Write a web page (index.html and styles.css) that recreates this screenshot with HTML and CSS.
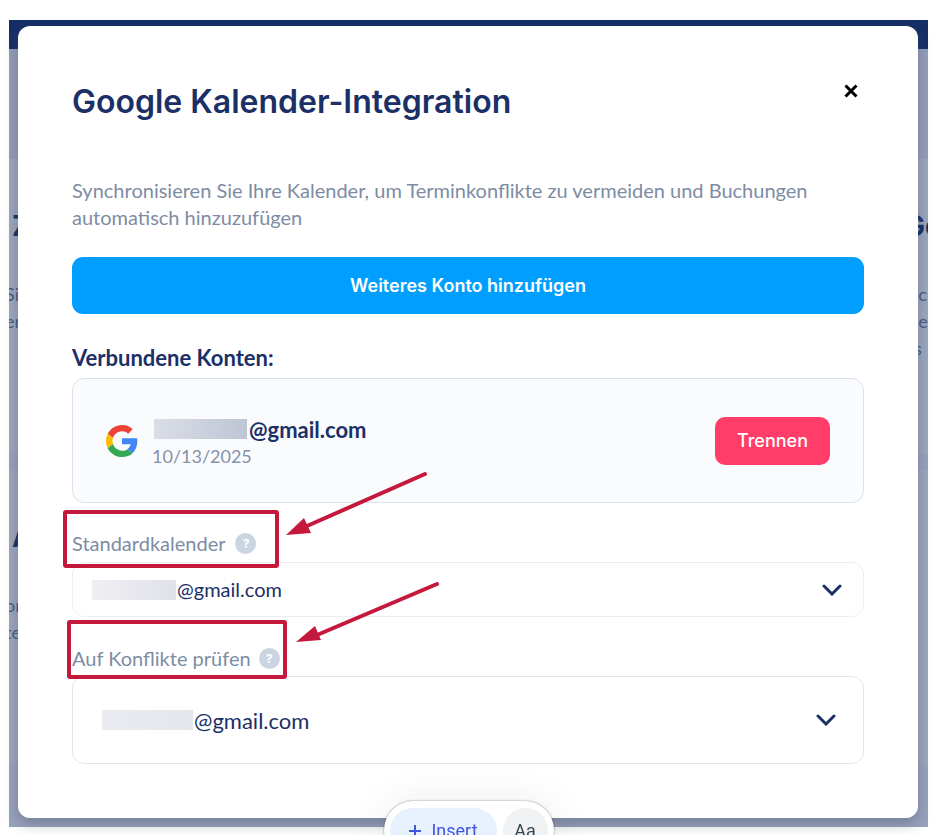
FILE: index.html
```html
<!DOCTYPE html>
<html lang="de">
<head>
    <meta charset="UTF-8">
    <meta name="viewport" content="width=device-width, initial-scale=1.0">
    <title>Google Kalender-Integration</title>
    <link rel="stylesheet" href="styles.css">
</head>
<body>
    <div class="stage">
        <div class="backdrop" aria-hidden="true">
            <div class="topbar"></div>
            <div class="hero"></div>
            <div class="panel">
                <div class="panel-left">
                    <h3>Z</h3>
                    <p>Sie<br>er</p>
                </div>
                <div class="panel-right">
                    <h3>Ge</h3>
                    <p>tsc<br>ine<br>ns</p>
                </div>
            </div>
            <div class="panel">
                <div class="panel-left">
                    <h3>A</h3>
                    <p>or<br>te</p>
                </div>
            </div>
        </div>

        <main class="modal" role="dialog" aria-labelledby="modal-title">
            <header class="modal-header">
                <h1 id="modal-title">Google Kalender-Integration</h1>
                <button class="close" type="button" aria-label="Schließen">
                    <svg width="16" height="16" viewBox="0 0 16 16"><path d="M2.5 2.5 13.5 13.5M13.5 2.5 2.5 13.5"/></svg>
                </button>
            </header>

            <p class="description">Synchronisieren Sie Ihre Kalender, um Terminkonflikte zu vermeiden und Buchungen automatisch hinzuzufügen</p>

            <button class="add-account" type="button">Weiteres Konto hinzufügen</button>

            <h2>Verbundene Konten:</h2>
            <section class="account">
                <svg class="google" width="32" height="32" viewBox="0 0 48 48">
                    <path fill="#EA4335" d="M24 9.5c3.54 0 6.71 1.22 9.21 3.6l6.85-6.85C35.9 2.38 30.47 0 24 0 14.62 0 6.51 5.38 2.56 13.22l7.98 6.19C12.43 13.72 17.74 9.5 24 9.5z"/>
                    <path fill="#4285F4" d="M46.98 24.55c0-1.57-.15-3.09-.38-4.55H24v9.02h12.94c-.58 2.96-2.26 5.48-4.78 7.18l7.73 6c4.51-4.18 7.09-10.36 7.09-17.65z"/>
                    <path fill="#FBBC05" d="M10.53 28.59c-.48-1.45-.76-2.99-.76-4.59s.27-3.14.76-4.59l-7.98-6.19C.92 16.46 0 20.12 0 24c0 3.88.92 7.54 2.56 10.78l7.97-6.19z"/>
                    <path fill="#34A853" d="M24 48c6.48 0 11.93-2.13 15.89-5.81l-7.73-6c-2.15 1.45-4.92 2.3-8.16 2.3-6.26 0-11.57-4.22-13.47-9.91l-7.98 6.19C6.51 42.62 14.62 48 24 48z"/>
                </svg>
                <div class="account-info">
                    <div class="email"><span class="redacted"></span>@gmail.com</div>
                    <div class="date">10/13/2025</div>
                </div>
                <button class="disconnect" type="button">Trennen</button>
            </section>

            <div class="settings">
                <div class="field-label">
                    <label for="default-calendar">Standardkalender</label>
                    <button class="help" type="button">?</button>
                </div>
                <div class="field field-default">
                    <select id="default-calendar">
                        <option>@gmail.com</option>
                    </select>
                    <span class="redacted"></span>
                    <svg class="chevron" width="20" height="12" viewBox="0 0 20 12"><path d="M2 2 10 10 18 2"/></svg>
                </div>

                <div class="field-label field-label-wide">
                    <label for="conflict-calendar">Auf Konflikte prüfen</label>
                    <button class="help" type="button">?</button>
                </div>
                <div class="field field-conflict">
                    <select id="conflict-calendar">
                        <option>@gmail.com</option>
                    </select>
                    <span class="redacted"></span>
                    <svg class="chevron" width="20" height="12" viewBox="0 0 20 12"><path d="M2 2 10 10 18 2"/></svg>
                </div>

                <svg class="annotations" width="392" height="220" viewBox="0 0 392 220">
                    <rect x="4" y="48" width="212" height="54" rx="1"/>
                    <rect x="8" y="158" width="216" height="55" rx="1"/>
                    <path d="M364 10 246 62M376 120 256 171"/>
                    <polygon points="225,71 243,54 250,69"/>
                    <polygon points="235,178 254,162 260,176"/>
                </svg>
            </div>
        </main>
    </div>

    <div class="toolbar">
        <button class="insert" type="button">
            <svg width="14" height="14" viewBox="0 0 14 14"><path d="M7 1V13M1 7H13"/></svg>
            Insert
        </button>
        <button class="text-style" type="button">Aa</button>
    </div>
</body>
</html>
```
FILE: styles.css
```css
* {
    margin: 0;
    padding: 0;
    box-sizing: border-box;
}

body {
    background: white;
    padding: 20px 9px 8px;
    font-family: Lato, sans-serif;
    font-size: 20px;
    line-height: 27px;
    color: #1b3066;
}

button,
select {
    font: inherit;
    color: inherit;
    border: none;
    background: none;
    cursor: pointer;
}

/* page behind the dialog */
.stage {
    display: grid;
    background: #98a2bc;
}

.backdrop,
.modal {
    grid-area: 1 / 1;
}

.backdrop {
    overflow: hidden;
    color: #46598a;
}

.topbar {
    height: 29px;
    background: #152e66;
}

.hero {
    height: 110px;
    background: #949db9;
}

.panel {
    display: flex;
    justify-content: space-between;
    height: 295px;
    padding-top: 49px;
    margin-bottom: 16px;
    background: #9ca7bc;
    font-size: 18px;
}

.panel h3 {
    font-family: Inter, sans-serif;
    font-size: 28px;
    line-height: 36px;
    margin-bottom: 37px;
    color: #152e66;
}

.panel-left,
.panel-right {
    width: 24px;
}

.panel-left h3 {
    padding-left: 3px;
}

.panel-left p {
    margin-left: -4px;
}

/* dialog */
.modal {
    position: relative;
    margin: 6px 10px 9px 9px;
    padding: 56px 54px 54px;
    background: white;
    border-radius: 12px;
    box-shadow: 0 6px 14px rgba(70, 80, 100, 0.4);
}

.modal-header {
    display: flex;
    justify-content: space-between;
    align-items: flex-start;
    margin-bottom: 55px;
}

h1 {
    font-family: Inter, sans-serif;
    font-size: 32px;
    font-weight: 600;
    line-height: 40px;
}

.close {
    display: flex;
    padding: 1px 5px;
}

.close svg {
    fill: none;
    stroke: black;
    stroke-width: 3;
}

.description {
    color: #7d8ca4;
    margin-bottom: 26px;
}

.add-account {
    display: block;
    width: 100%;
    height: 57px;
    margin-bottom: 30px;
    border-radius: 11px;
    background: #009fff;
    color: white;
    font-family: Inter, sans-serif;
    font-size: 18px;
    font-weight: 600;
}

h2 {
    font-size: 22px;
    font-weight: 700;
    line-height: 27px;
    margin-bottom: 7px;
}

.account {
    display: flex;
    align-items: center;
    gap: 14px;
    height: 125px;
    padding: 0 33px;
    border: 1px solid #dbe2ec;
    border-radius: 12px;
    background: #fafbfd;
}

.account-info {
    flex: 1;
    padding-top: 4px;
}

.email {
    display: flex;
    align-items: center;
    font-size: 22px;
    font-weight: 700;
}

.date {
    color: #8493a9;
    font-size: 18px;
}

.redacted {
    width: 93px;
    height: 20px;
    margin: 0 2px;
    background: linear-gradient(90deg, #dadee7, #bec5d4);
}

.disconnect {
    height: 48px;
    padding: 0 22px;
    border-radius: 10px;
    background: #ff3d68;
    color: white;
    font-family: Inter, sans-serif;
    font-size: 18px;
    font-weight: 500;
}

/* calendar settings */
.settings {
    position: relative;
    padding-top: 27px;
}

.field-label {
    display: flex;
    align-items: center;
    gap: 10px;
    margin-bottom: 5px;
    color: #7d8ca4;
}

.field-label-wide {
    gap: 8px;
    margin-bottom: 4px;
}

.help {
    width: 21px;
    height: 21px;
    border-radius: 50%;
    background: #cbd5e2;
    color: white;
    font-family: Inter, sans-serif;
    font-size: 12px;
    font-weight: 700;
    line-height: 21px;
}

.field {
    position: relative;
    display: flex;
    align-items: center;
}

.field select {
    appearance: none;
    flex: 1;
    height: 55px;
    padding-left: 104px;
    border: 1px solid #eceff2;
    border-radius: 12px;
    background: white;
}

.field .redacted {
    position: absolute;
    left: 18px;
    width: 84px;
    background: linear-gradient(90deg, #f0eff3, #e0e1e9);
}

.field .chevron {
    position: absolute;
    right: 22px;
    fill: none;
    stroke: #1b3066;
    stroke-width: 3;
    stroke-linecap: round;
    pointer-events: none;
}

.field-default {
    margin-bottom: 28px;
}

.field-conflict select {
    height: 88px;
    padding-left: 121px;
    border-color: #dfe6ef;
    font-size: 22px;
}

.field-conflict .redacted {
    left: 28px;
    width: 91px;
    background: linear-gradient(90deg, #e9ebf1, #e5e7ed);
}

.field-conflict .chevron {
    right: 28px;
}

.annotations {
    position: absolute;
    top: -39px;
    left: -11px;
    fill: none;
    stroke: #c4183c;
    stroke-width: 4;
    stroke-linecap: round;
    pointer-events: none;
}

.annotations polygon {
    fill: #c4183c;
    stroke: none;
}

/* floating editor bar, partly below the fold */
.toolbar {
    position: fixed;
    left: 50%;
    bottom: -25px;
    transform: translateX(-50%);
    display: flex;
    gap: 6px;
    padding: 7px 6px;
    border-radius: 29px;
    background: white;
    box-shadow: 0 0 2px rgba(0, 0, 0, 0.5), 0 0 40px rgba(0, 0, 0, 0.08);
    font-family: Roboto, sans-serif;
    font-size: 18px;
}

.toolbar button {
    display: flex;
    align-items: center;
    justify-content: center;
    gap: 9px;
    height: 45px;
    border-radius: 23px;
}

.toolbar .insert {
    width: 107px;
    background: #e8f2ff;
    color: #4156dc;
}

.insert svg {
    stroke: #4156dc;
    stroke-width: 2;
}

.toolbar .text-style {
    width: 45px;
    background: #f0f2f4;
    color: #33464f;
}
```
